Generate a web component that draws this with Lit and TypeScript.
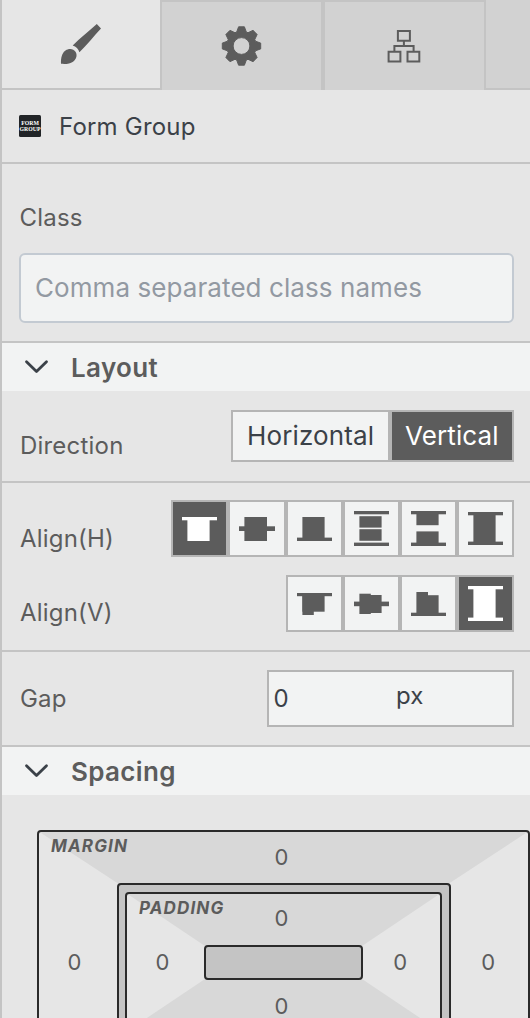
import { LitElement, html, svg, css } from "lit";
import { customElement, property } from "lit/decorators.js";

type Box = [number, number, number, number];

// Each glyph is a list of [x1, y1, x2, y2] blocks inside a 57px cell.
const ALIGN_H: Box[][] = [
  [[11, 17, 46, 20.3], [16.4, 17, 38.6, 41]],
  [[11, 26.3, 47, 31], [16.4, 17, 39, 41]],
  [[16.4, 17, 38.6, 41], [11, 37.6, 46, 41]],
  [[11, 11, 46, 14.3], [16.4, 16.2, 38.6, 27.6], [16.4, 29.2, 38.6, 40.8], [11, 42.6, 46, 46]],
  [[11, 11, 46, 14.3], [16.4, 12, 38.6, 25.2], [16.4, 31.4, 38.6, 44], [11, 42.6, 46, 46]],
  [[11, 12, 46, 15.3], [16.4, 13, 38.6, 43], [11, 41.6, 46, 45]],
];
const ALIGN_V: Box[][] = [
  [[11, 18, 46, 21.2], [16.4, 18, 38.6, 36.7], [16.4, 18, 27.8, 40]],
  [[11, 26.6, 46, 31.2], [16.4, 18.7, 27.8, 39], [27, 20, 38.6, 38]],
  [[16.4, 17, 28, 40], [27, 20.2, 38.6, 40], [11, 37.7, 46, 41]],
  [[11, 11, 46, 14.3], [16.4, 12, 38.6, 45], [11, 42.6, 46, 46]],
];

const gearPath = (() => {
  const rot = (x: number, y: number, a: number) =>
    `${(x * Math.cos(a) - y * Math.sin(a)).toFixed(2)} ${(x * Math.sin(a) + y * Math.cos(a)).toFixed(2)}`;
  const pts: string[] = [];
  for (let i = 0; i < 8; i++) {
    const a = (i * Math.PI) / 4;
    pts.push(rot(-4.8, -14, a), rot(-2.9, -19.2, a), rot(2.9, -19.2, a), rot(4.8, -14, a));
  }
  return `M${pts.join("L")}ZM8.4 0A8.4 8.4 0 1 0 -8.4 0A8.4 8.4 0 1 0 8.4 0Z`;
})();

@customElement("align-group")
class AlignGroup extends LitElement {
  @property({ attribute: false }) icons: Box[][] = [];
  @property({ type: Number }) active = 0;

  static styles = css`
    :host { display: flex; }
    .cell { box-sizing: border-box; width: 57px; height: 57px; border: 2px solid #b5b5b5; background: #f2f3f3; color: #5c5c5c; }
    .cell.wide { width: 58px; }
    .cell.on { background: #5c5c5c; color: #fff; }
    .glyph { display: block; margin: -2px; fill: currentColor; }
  `;

  render() {
    return this.icons.map(
      (boxes, i) => html`<div class="cell ${i === this.active ? "on" : ""} ${this.icons.length === 6 && i === 1 ? "wide" : ""}">
        <svg class="glyph" width="57" height="57">
          ${boxes.map(([a, b, c, d]) => svg`<rect x=${a} y=${b} width=${c - a} height=${d - b}></rect>`)}
        </svg>
      </div>`
    );
  }
}

@customElement("app-root")
class AppRoot extends LitElement {
  static styles = css`
    :host {
      display: block; box-sizing: border-box; height: 1018px; overflow: hidden;
      border-left: 2px solid #c4c4c4; background: #e6e6e6; color: #5c5c5c;
      font-family: Inter, sans-serif; font-size: 24px; line-height: 30px; letter-spacing: 0.2px;
    }
    .tabs { display: flex; height: 90px; }
    .tab { box-sizing: border-box; height: 90px; background: #d2d2d2; border: 0 solid #c4c4c4; }
    .brush { width: 160px; background: #e6e6e6; border-right-width: 2px; border-bottom-width: 2px; }
    .gear { width: 161px; border-top-width: 2px; border-right-width: 2px; }
    .tree { width: 163px; border-top-width: 2px; border-right-width: 2px; border-left-width: 2px; }
    .rest { flex: 1; border-bottom-width: 2px; }
    .tab svg { display: block; }
    .row { box-sizing: border-box; display: flex; justify-content: space-between; border-bottom: 2px solid #c4c4c4; padding: 0 16px 0 18px; }
    .title { height: 74px; justify-content: flex-start; gap: 18px; padding: 25px 17px 0; color: #3b4148; line-height: 24px; }
    .badge { width: 22px; height: 22px; border-radius: 1.5px; background: #212427; color: #fff; font: bold 5.8px/6px "Liberation Serif", serif; letter-spacing: 0; text-align: center; padding-top: 5px; box-sizing: border-box; }
    .class { height: 179px; flex-direction: column; justify-content: flex-start; gap: 20px; padding: 39px 16px 0 17px; }
    .class .label { padding-left: 0.5px; }
    .input { box-sizing: border-box; height: 70px; border: 2px solid #c3cad2; border-radius: 6px; background: #f2f3f3; color: #9299a2; font-size: 26px; letter-spacing: 0.08px; padding: 18px 14px; }
    .head { display: flex; align-items: center; gap: 21px; height: 48px; padding-left: 22px; background: #f2f3f3; font-weight: 600; font-size: 26px; letter-spacing: 0.35px; }
    .head .name { padding-top: 2px; }
    .chev { display: block; fill: none; stroke: #3b4148; stroke-width: 2.8; stroke-linecap: round; stroke-linejoin: round; }
    .direction { height: 92px; padding-top: 19px; }
    .direction .label { padding-top: 21px; }
    .toggle { display: flex; height: 52px; font-size: 26px; letter-spacing: 0.12px; color: #3b4148; }
    .opt { box-sizing: border-box; border: 2px solid #b5b5b5; background: #f2f3f3; padding: 9px 0 0 14px; width: 159px; }
    .opt.on { background: #5c5c5c; color: #fff; width: 124px; padding-left: 13px; }
    .aligns { height: 169px; flex-direction: column; justify-content: flex-start; gap: 18px; padding-top: 17px; }
    .line { display: flex; justify-content: space-between; height: 57px; }
    .line .label { padding-top: 24px; }
    .line.v .label { padding-top: 23px; }
    .gap { height: 95px; padding-top: 18px; }
    .gap .label { padding-top: 14px; }
    .size { box-sizing: border-box; display: flex; width: 247px; height: 57px; border: 2px solid #b5b5b5; background: #f2f3f3; color: #3b4148; padding: 12px 0 0 5px; }
    .size .num { width: 122.5px; margin-left: -0.5px; }
    .size .unit { margin-top: -3px; }
    .box { display: block; margin: 35px 0 0 35px; letter-spacing: 0; }
    .n { font-size: 22px; fill: #5c5c5c; text-anchor: middle; }
    .t { font-size: 17px; font-weight: 700; font-style: italic; fill: #5c5c5c; letter-spacing: 1.15px; }
    .edge { fill: none; stroke: #2a2a2a; stroke-width: 2; }
  `;

  chevron() {
    return html`<svg class="chev" width="26" height="20"><path d="M2.500 4.800L12.500 14.600L22.500 4.800"></path></svg>`;
  }

  render() {
    return html`
      <div class="tabs">
        <div class="tab brush">
          <svg width="158" height="88" fill="#5c5c5c">
            <path d="M94.8 24L99 28.4C92 36 85 44.500 77.400 52.300C76.500 49 74 46.600 70.700 45.500C78.500 37.500 87 31 94.800 24Z"></path>
            <path d="M59 63.800C58.600 58 60 53 63.500 50.500C67 48 71.500 48.600 73.700 52C75.500 55 74.400 59.200 71 61.700C68 63.900 63.500 64.200 59 63.800Z"></path>
          </svg>
        </div>
        <div class="tab gear">
          <svg width="159" height="88" fill="#5c5c5c">
            <path transform="translate(79.500 44)" d=${gearPath} fill-rule="evenodd" stroke="#5c5c5c" stroke-width="1" stroke-linejoin="round"></path>
          </svg>
        </div>
        <div class="tab tree">
          <svg width="159" height="88" fill="none" stroke="#5c5c5c" stroke-width="2">
            <path d="M72.900 28.900H84.900V38.700H72.900ZM78.900 38.700V44M69.400 49.500V43.900H88.600V49.500M63.600 49.800H75.400V59.500H63.600ZM82.500 49.800H94.300V59.500H82.500Z"></path>
          </svg>
        </div>
        <div class="tab rest"></div>
      </div>
      <div class="row title"><div class="badge">FORM<br />GROUP</div><span>Form Group</span></div>
      <div class="row class">
        <div class="label">Class</div>
        <div class="input">Comma separated class names</div>
      </div>
      <div class="head">${this.chevron()}<span class="name">Layout</span></div>
      <div class="row direction">
        <div class="label">Direction</div>
        <div class="toggle"><div class="opt">Horizontal</div><div class="opt on">Vertical</div></div>
      </div>
      <div class="row aligns">
        <div class="line"><div class="label">Align(H)</div><align-group .icons=${ALIGN_H} .active=${0}></align-group></div>
        <div class="line v"><div class="label">Align(V)</div><align-group .icons=${ALIGN_V} .active=${3}></align-group></div>
      </div>
      <div class="row gap">
        <div class="label">Gap</div>
        <div class="size"><span class="num">0</span><span class="unit">px</span></div>
      </div>
      <div class="head">${this.chevron()}<span class="name">Spacing</span></div>
      <svg class="box" width="493" height="265" viewBox="37 830 493 265">
        <rect x="38" y="831" width="491" height="263" rx="3" fill="#e6e6e6"></rect>
        <path d="M38 831H529L283.500 992ZM38 1094H529L283.500 932Z" fill="#d8d8d8"></path>
        <rect class="edge" x="38" y="831" width="491" height="263" rx="3"></rect>
        <rect x="118" y="884" width="332" height="157" rx="3" fill="#c4c4c4"></rect>
        <rect x="126" y="893" width="315" height="139" rx="3" fill="#e6e6e6"></rect>
        <path d="M126 893H441L362 946H205ZM126 1032H441L362 979H205Z" fill="#d8d8d8"></path>
        <rect class="edge" x="118" y="884" width="332" height="157" rx="3"></rect>
        <rect class="edge" x="126" y="893" width="315" height="139" rx="3"></rect>
        <rect class="edge" x="205" y="946" width="157" height="33" rx="3" style="fill:#c4c4c4"></rect>
        <text class="t" x="51" y="852">MARGIN</text>
        <text class="t" x="139" y="914">PADDING</text>
        <text class="n" x="281.500" y="865">0</text>
        <text class="n" x="281.500" y="926">0</text>
        <text class="n" x="281.500" y="1014">0</text>
        <text class="n" x="74.500" y="970">0</text>
        <text class="n" x="162.500" y="970">0</text>
        <text class="n" x="400.300" y="970">0</text>
        <text class="n" x="488.300" y="970">0</text>
      </svg>
    `;
  }
}
